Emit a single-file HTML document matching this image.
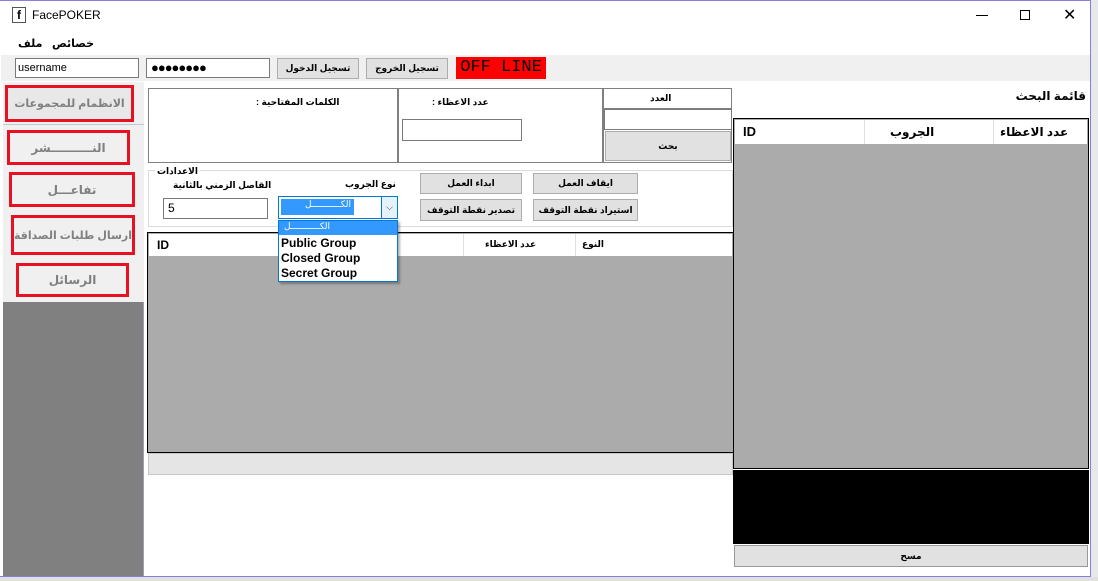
<!DOCTYPE html>
<html><head><meta charset="utf-8"><style>
*{box-sizing:border-box;margin:0;padding:0}
body{width:1098px;height:581px;position:relative;overflow:hidden;background:#e8e8e8;font-family:"Liberation Sans","DejaVu Sans",sans-serif;font-size:11px;color:#000}
.a{position:absolute}
.btn{position:absolute;background:#e1e1e1;border:1px solid #adadad;font-weight:bold;font-size:9px;text-align:center;display:flex;align-items:center;justify-content:center;white-space:nowrap;direction:rtl}
.inp{position:absolute;background:#fff;border:1px solid #7a7a7a}
.red{position:absolute;border:3px solid #e81123;background:#f0f0f0;color:#808080;font-size:12px;font-weight:bold;display:flex;align-items:center;justify-content:center;white-space:nowrap;direction:rtl}
.lbl{position:absolute;font-weight:bold;font-size:9px;white-space:nowrap;direction:rtl}
</style></head><body>
<div class="a" style="left:0;top:0;width:1091px;height:577px;background:#fff;border-right:1px solid #8080e0;border-bottom:1px solid #8080e0"></div>
<div class="a" style="left:0;top:0;width:1091px;height:1px;background:#8a80e0"></div>
<div class="a" style="left:12px;top:7px;width:14px;height:16px;border:1px solid #555;font-weight:bold;font-size:12px;text-align:center;line-height:14px">f</div>
<div class="a" style="left:32px;top:8px;font-size:12px">FacePOKER</div>
<div class="a" style="left:976px;top:15px;width:12px;height:1px;background:#000"></div>
<div class="a" style="left:1020px;top:10px;width:10px;height:10px;border:1px solid #000"></div>
<div class="a" style="left:1063px;top:5px;font-size:16px">✕</div>
<div class="a" style="left:18px;top:37px;font-size:11px;font-weight:bold">ملف</div>
<div class="a" style="left:52px;top:37px;font-size:11px;font-weight:bold">خصائص</div>
<div class="a" style="left:1px;top:55px;width:1089px;height:26px;background:#f0f0f0"></div>
<div class="inp" style="left:15px;top:58px;width:124px;height:20px;padding:3px 2px;font-size:11px">username</div>
<div class="inp" style="left:146px;top:58px;width:124px;height:20px;padding:1px 4px;font-size:13px;letter-spacing:-1px">●●●●●●●●</div>
<div class="btn" style="left:277px;top:58px;width:82px;height:21px">تسجيل الدخول</div>
<div class="btn" style="left:366px;top:58px;width:82px;height:21px">تسجيل الخروج</div>
<div class="a" style="left:456px;top:57px;width:90px;height:22px;background:#ff0000;color:#000;font-family:'Liberation Mono',monospace;font-size:17px;text-align:center;line-height:22px">OFF LINE</div>
<div class="a" style="left:3px;top:82px;width:141px;height:494px;background:#808080;border-right:1px solid #a0a0b0"></div>
<div class="a" style="left:3px;top:82px;width:141px;height:220px;background:#f0f0f0"></div>
<div class="a" style="left:3px;top:124px;width:141px;height:1px;background:#c0c8d8"></div>
<div class="red" style="left:5px;top:85px;width:129px;height:37px;background:#e8e8e8;font-size:11px">الانظمام للمجموعات</div>
<div class="red" style="left:7px;top:130px;width:123px;height:35px">النــــــــــشر</div>
<div class="red" style="left:9px;top:172px;width:126px;height:35px">تفاعـــل</div>
<div class="red" style="left:11px;top:215px;width:124px;height:40px;font-size:11px">ارسال طلبات الصداقة</div>
<div class="red" style="left:16px;top:263px;width:113px;height:34px">الرسائل</div>
<div class="a" style="left:148px;top:88px;width:584px;height:75px;border:1px solid #808080"></div>
<div class="a" style="left:397px;top:88px;width:2px;height:75px;background:#808080"></div>
<div class="a" style="left:602px;top:88px;width:2px;height:75px;background:#808080"></div>
<div class="lbl" style="left:256px;top:97px">الكلمات المفتاحية :</div>
<div class="lbl" style="left:432px;top:97px">عدد الاعظاء :</div>
<div class="inp" style="left:402px;top:119px;width:120px;height:22px"></div>
<div class="lbl" style="left:650px;top:93px">العدد</div>
<div class="a" style="left:604px;top:108px;width:128px;height:1px;background:#808080"></div>
<div class="inp" style="left:604px;top:109px;width:128px;height:21px"></div>
<div class="btn" style="left:605px;top:131px;width:126px;height:30px">بحث</div>
<div class="a" style="left:148px;top:170px;width:585px;height:57px;border:1px solid #dcdcdc"></div>
<div class="lbl" style="left:155px;top:166px;background:#fff;padding:0 2px">الاعدادات</div>
<div class="lbl" style="left:173px;top:180px">القاصل الزمني بالثانية</div>
<div class="lbl" style="left:345px;top:179px">نوع الجروب</div>
<div class="inp" style="left:163px;top:198px;width:105px;height:21px;padding:2px 4px;font-size:12px">5</div>
<div class="a" style="left:278px;top:196px;width:120px;height:23px;border:1px solid #0078d7;background:#fff"></div>
<div class="a" style="left:281px;top:199px;width:73px;height:16px;background:#3399ff;color:#fff;font-size:9px;text-align:right;padding-right:3px">الكـــــــــــل</div>
<div class="a" style="left:381px;top:197px;width:16px;height:21px;background:#e5f1fb;border-left:1px solid #0078d7;text-align:center;font-size:9px;line-height:20px;color:#333">⌵</div>
<div class="btn" style="left:420px;top:173px;width:102px;height:21px">ابداء العمل</div>
<div class="btn" style="left:533px;top:173px;width:105px;height:21px">ايقاف العمل</div>
<div class="btn" style="left:420px;top:199px;width:102px;height:22px">تصدير نقطة التوقف</div>
<div class="btn" style="left:533px;top:199px;width:105px;height:22px">استيراد  نقطة التوقف</div>
<div class="a" style="left:147px;top:232px;width:587px;height:221px;background:#ababab;border:1px solid #000"></div>
<div class="a" style="left:149px;top:234px;width:583px;height:22px;background:#fff"></div>
<div class="a" style="left:463px;top:234px;width:1px;height:22px;background:#e0e0e0"></div>
<div class="a" style="left:575px;top:234px;width:1px;height:22px;background:#e0e0e0"></div>
<div class="a" style="left:157px;top:238px;font-size:12px;font-weight:bold">ID</div>
<div class="lbl" style="left:485px;top:239px">عدد الاعظاء</div>
<div class="lbl" style="left:582px;top:239px">النوع</div>
<div class="a" style="left:148px;top:453px;width:585px;height:22px;background:#e5e5e5;border:1px solid #c8c8c8"></div>
<div class="a" style="left:278px;top:220px;width:120px;height:62px;background:#fff;border:1px solid #0078d7;box-shadow:2px 2px 2px rgba(0,0,0,.3)"></div>
<div class="a" style="left:279px;top:221px;width:118px;height:14px;background:#3399ff;color:#fff;font-size:9px;padding-left:5px">الكـــــــــــل</div>
<div class="a" style="left:281px;top:236px;font-size:12px;font-weight:bold;line-height:15px">Public Group<br>Closed Group<br>Secret Group</div>
<div class="a" style="left:1000px;top:89px;width:86px;text-align:right;font-size:12px;font-weight:bold;direction:rtl;white-space:nowrap">قائمة البحث</div>
<div class="a" style="left:733px;top:118px;width:356px;height:351px;background:#ababab;border:1px solid #000"></div>
<div class="a" style="left:735px;top:120px;width:352px;height:24px;background:#fff"></div>
<div class="a" style="left:864px;top:120px;width:1px;height:24px;background:#e0e0e0"></div>
<div class="a" style="left:993px;top:120px;width:1px;height:24px;background:#e0e0e0"></div>
<div class="a" style="left:743px;top:124px;font-size:13px;font-weight:bold">ID</div>
<div class="a" style="left:890px;top:125px;font-size:12px;font-weight:bold">الجروب</div>
<div class="a" style="left:1000px;top:125px;font-size:12px;font-weight:bold">عدد الاعظاء</div>
<div class="a" style="left:733px;top:470px;width:356px;height:74px;background:#000"></div>
<div class="btn" style="left:734px;top:545px;width:354px;height:22px;border-color:#999">مسح</div>
<div class="a" style="left:0;top:577px;width:1098px;height:4px;background:#e0e0e0"></div>
</body></html>
